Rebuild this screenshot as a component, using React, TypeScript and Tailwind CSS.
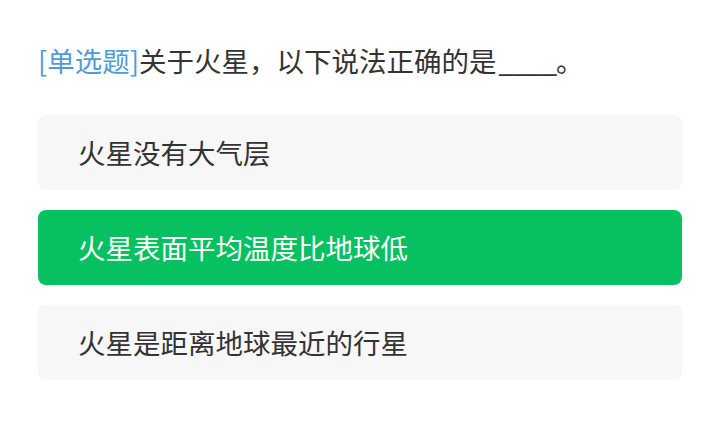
const options = [
  { text: "火星没有大气层", selected: false },
  { text: "火星表面平均温度比地球低", selected: true },
  { text: "火星是距离地球最近的行星", selected: false },
];

export default function App() {
  return (
    <div
      className="w-[720px] h-[447px] bg-white px-[38px] pt-[43px]"
      style={{ fontFamily: '"Noto Sans CJK SC", "Noto Sans", sans-serif' }}
    >
      <div className="text-[27.5px] leading-[34px] text-[#333333]">
        <span className="text-[#4e9cd8]">[单选题]</span>
        关于火星，以下说法正确的是<span className="tracking-[-1px] ml-[2px]">____</span>。
      </div>
      <div className="mt-[38px] flex flex-col gap-[20px]">
        {options.map((opt, i) => (
          <div
            key={i}
            className={
              opt.selected
                ? "h-[75px] rounded-[8px] bg-[#07c160] text-white flex items-center pl-[40px] text-[27.5px]"
                : "h-[75px] rounded-[8px] bg-[#f7f7f7] text-[#333333] flex items-center pl-[40px] text-[27.5px]"
            }
          >
            {opt.text}
          </div>
        ))}
      </div>
    </div>
  );
}
